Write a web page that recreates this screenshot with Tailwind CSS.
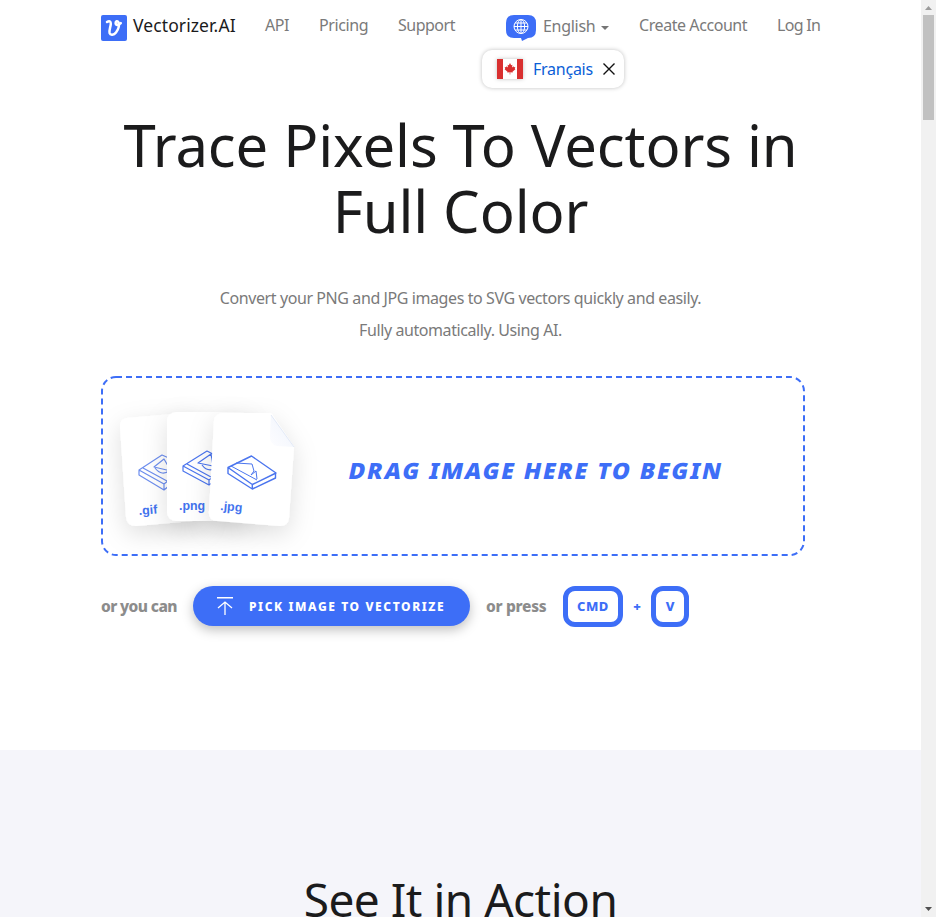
<!DOCTYPE html>
<html lang="en">
<head>
<meta charset="utf-8">
<title>Vectorizer.AI</title>
<script src="https://cdn.jsdelivr.net/npm/@tailwindcss/browser@4"></script>
</head>
<body class="h-[917px] overflow-hidden bg-white font-['Noto_Sans','Open_Sans',sans-serif] text-[#7a7a7a]">
<div class="flex h-[917px]">
  <div class="h-full w-[921px] shrink-0 overflow-hidden">
    <header class="flex h-[52px] pl-[101px] text-base leading-6 whitespace-nowrap">
      <a class="flex w-[164px] pt-[15px]">
        <svg class="h-[26px] w-[26px] shrink-0" viewBox="0 0 26 26"><rect width="26" height="26" rx="2" fill="#3d6ef7"/><path d="M6 7C8.2 5.4 10 6.2 9.8 8.8C9.6 12 7.8 15.5 8.6 18.2C9.4 20.5 12.8 20.2 15 17.4C17.4 14.4 18.4 10 17.4 7.3C16.6 5.4 14.6 6.1 14.6 8C14.6 10.4 17.6 10.6 19.8 8.2" fill="none" stroke="#fff" stroke-width="2.5" stroke-linecap="round" stroke-linejoin="round"/></svg>
        <span class="-mt-[2px] ml-[6px] text-[17.5px] tracking-[0.1px] text-[#1b1b1c]">Vectorizer.AI</span>
      </a>
      <a class="w-[54px] pt-[13px] tracking-[-0.4px]">API</a>
      <a class="w-[79px] pt-[13px] tracking-[-0.4px]">Pricing</a>
      <a class="w-[108px] pt-[13px] tracking-[-0.5px]">Support</a>
      <a class="flex w-[133px] pt-[14px]">
        <svg class="mt-px h-[26px] w-[30px] shrink-0" viewBox="0 0 30 26"><path d="M8 0H22Q30 0 30 8V15Q30 23 22 23L16 26L15 23H8Q0 23 0 15V8Q0 0 8 0Z" fill="#3d6ef7"/><g fill="none" stroke="#fff" stroke-width="1"><circle cx="15" cy="11.5" r="7"/><ellipse cx="15" cy="11.5" rx="3.6" ry="7"/><path d="M15 4.5V18.5M8 11.5H22M9 8H21M9 15H21"/></g></svg>
        <span class="ml-[7px] tracking-[-0.3px]">English</span>
        <svg class="mt-[12px] ml-[6px] h-1 w-2" viewBox="0 0 8 4"><path d="M0 0H8L4 4Z" fill="#757575"/></svg>
      </a>
      <a class="w-[138px] pt-[13px] tracking-[-0.43px]">Create Account</a>
      <a class="pt-[13px] tracking-[-0.7px]">Log In</a>
    </header>
    <div class="-mt-[2px] ml-[482px] flex h-[38px] w-[142px] items-center rounded-[10px] bg-white pl-[15px] shadow-[0_0_4px_rgba(0,0,0,0.25)]">
      <svg class="h-5 w-[26px] shrink-0 shadow-[0_0_4px_rgba(0,0,0,0.25)]" viewBox="0 0 26 20"><path fill="#fff" d="M0 0H26V20H0Z"/><path fill="#d93030" d="M0 0H6V20H0ZM20 0H26V20H20ZM13 4L14.2 6.2L15.4 5.7L15 8.6L16.5 7.3L16.9 8.2L18.3 8L17.8 9.8L18.4 10.3L15.5 12.7L15.8 13.6L13.3 13.2V15.5H12.7V13.2L10.2 13.6L10.5 12.7L7.6 10.3L8.2 9.8L7.7 8L9.1 8.2L9.5 7.3L11 8.6L10.6 5.7L11.8 6.2Z"/></svg>
      <span class="ml-[10px] w-[61px] text-base leading-6 tracking-[-0.25px] text-[#0b5ed7]">Français</span>
      <svg class="ml-[9px] h-3 w-3" viewBox="0 0 12 12"><path d="M.5 .5L11.5 11.5M11.5 .5L.5 11.5" stroke="#111" stroke-width="1.4"/></svg>
    </div>
    <main class="h-[662px]">
      <h1 class="pt-[24px] text-center text-[58px] leading-[66px] tracking-[-0.1px] text-[#1b1b1c]">Trace Pixels To Vectors in<br>Full Color</h1>
      <p class="mt-[38px] text-center text-base leading-8 tracking-[-0.41px]">Convert your PNG and JPG images to SVG vectors quickly and easily.<br>Fully automatically. Using AI.</p>
      <div class="relative mt-[30px] ml-[101px] flex h-[180px] w-[704px] items-center">
        <svg class="absolute inset-0 h-[180px] w-[704px]" viewBox="0 0 704 180"><rect x="1" y="1" width="702" height="178" rx="14" fill="none" stroke="#3d6ef7" stroke-width="2" stroke-dasharray="6 4"/></svg>
        <svg class="h-[180px] w-[248px] shrink-0" viewBox="101 376 248 180" font-family="Liberation Sans, Arial, sans-serif" font-weight="700" font-size="12.4" fill="#4273ee">
          <defs>
            <filter id="sh" x="-50%" y="-50%" width="200%" height="200%"><feDropShadow dx="0" dy="8" stdDeviation="12" flood-color="#000" flood-opacity=".13"/></filter>
            <linearGradient id="fold" x1="1" y1="0" x2="0" y2="1"><stop offset="0" stop-color="#eef3fc"/><stop offset="1" stop-color="#fdfdff"/></linearGradient>
          </defs>
          <g filter="url(#sh)"><path d="M127 418L196 412L204 520L136 526Q127 526 126 517L120 426Q120 419 127 418Z" fill="#fff"/></g>
          <g fill="none" stroke="#6d8eee" stroke-width="1.2" stroke-linejoin="round"><path d="M139 470L162 455L187 466L164 484ZM139 470V475L164 490L187 471V466M164 484V490M143 468L167 481M154 467L164 459L171 471ZM155 468Q162 477 170 470"/></g>
          <text x="139" y="515" transform="rotate(-5 139 515)">.gif</text>
          <g filter="url(#sh)"><rect x="167" y="412" width="82" height="109" rx="9" fill="#fff"/></g>
          <g fill="none" stroke="#4b75ee" stroke-width="1.2" stroke-linejoin="round"><path d="M183 466L207 451L232 464L209 480ZM183 466V471L209 485L232 469V464M209 480V485M187 464L211 477M198 463L211 454L213 466ZM202 465Q208 473 216 468"/></g>
          <text x="179" y="510">.png</text>
          <g filter="url(#sh)"><path d="M224 413H271L294 447L289 518Q288 526 280 526L217 521Q208 520 209 511L214 421Q215 413 224 413Z" fill="#fff"/></g>
          <path d="M271 415L294 447L277 446Q269 444 270 435Z" fill="url(#fold)"/><path d="M271 415L294 447" stroke="#e3eaf7"/>
          <g fill="none" stroke="#4b75ee" stroke-width="1.4" stroke-linejoin="round"><path d="M228 467.5L251.5 456L276 473L252.3 484.5ZM228 467.5V473.5L252.3 489L275.5 478V473M252.3 484.5V489"/><path stroke-width="1" d="M231 466L257 480M236 463L252 464L254 471L251 475L256 471L257 479"/></g>
          <text x="220" y="510" transform="rotate(5 220 510)">.jpg</text>
        </svg>
        <span class="mt-[10px] -skew-x-12 text-[22.5px] leading-8 font-black tracking-[2.05px] whitespace-nowrap text-[#3d6ef7]">DRAG IMAGE HERE TO BEGIN</span>
      </div>
      <div class="mt-[30px] ml-[101px] flex h-[41px] items-center text-base font-extrabold whitespace-nowrap text-[#8c8c8c]">
        <span class="w-[92px] text-[15.5px] tracking-[-0.6px]">or you can</span>
        <button class="mb-px flex h-10 w-[277px] shrink-0 items-center rounded-full bg-[#3d6ef7] pl-6 text-xs font-extrabold tracking-[1.6px] text-white shadow-[0_4px_12px_rgba(0,0,0,0.25)]">
          <svg class="mr-4 h-[18px] w-4 shrink-0" viewBox="0 0 16 18"><path d="M0 .75H16M8 18V5M1 11L8 5L15 11" fill="none" stroke="#fff" stroke-width="1.3"/></svg><span class="pt-px">PICK IMAGE TO VECTORIZE</span>
        </button>
        <span class="ml-4 w-[77px] text-[15.5px] tracking-[-0.3px]">or press</span>
        <span class="flex h-[41px] w-[60px] items-center justify-center rounded-[12px] border-[5px] border-[#3d6ef7] text-[13px] tracking-[0.5px] text-[#3d6ef7]">CMD</span>
        <span class="w-[28px] text-center text-[13px] font-black text-[#3d6ef7]">+</span>
        <span class="flex h-[41px] w-[38px] items-center justify-center rounded-[12px] border-[5px] border-[#3d6ef7] text-[13px] text-[#3d6ef7]">V</span>
      </div>
    </main>
    <section class="h-[167px] overflow-hidden bg-[#f5f5fa] pt-[119px]">
      <h2 class="text-center text-[46px] leading-[60px] tracking-[-0.5px] text-[#1b1b1c]">See It in Action</h2>
    </section>
  </div>
  <div class="flex h-full w-[15px] shrink-0 flex-col items-center justify-between bg-[#f1f1f1]">
    <div class="flex flex-col items-center">
      <svg class="h-[15px] w-[15px]" viewBox="0 0 15 15"><path d="M4 10L7.5 6L11 10Z" fill="#9b9b9b"/></svg>
      <div class="h-[105px] w-[11px] bg-[#c1c1c1]"></div>
    </div>
    <svg class="h-[15px] w-[15px]" viewBox="0 0 15 15"><path d="M4 5H11L7.5 9Z" fill="#505050"/></svg>
  </div>
</div>
</body>
</html>
